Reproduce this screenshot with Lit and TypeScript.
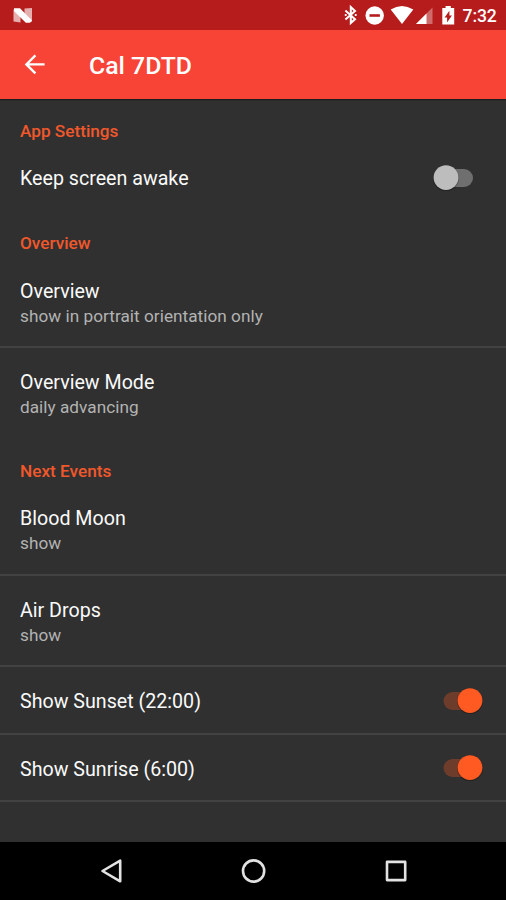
import { LitElement, html, css, nothing } from "lit";
import { customElement, property } from "lit/decorators.js";

@customElement("toggle-switch")
class ToggleSwitch extends LitElement {
  static properties = { on: { type: Boolean, reflect: true } };
  declare on: boolean;
  static styles = css`
    :host { display: block; width: 50px; height: 26px; flex: none; }
    svg { display: block; }
    .track { fill: #6f6f6f; }
    .thumb { fill: #bdbdbd; }
    :host([on]) .track { fill: #6e3c2b; }
    :host([on]) .thumb { fill: #ff5a22; }
    .shade { fill: #000; opacity: 0.25; }
  `;
  render() {
    const x = this.on ? 37 : 13;
    return html`<svg width="50" height="26" viewBox="0 0 50 26">
      <rect class="track" x="10.5" y="4" width="29.5" height="18" rx="9"></rect>
      <circle class="shade" cx=${x} cy="13.2" r="13"></circle>
      <circle class="thumb" cx=${x} cy="12.6" r="12.4"></circle>
    </svg>`;
  }
}

@customElement("setting-row")
class SettingRow extends LitElement {
  @property() label!: string;
  @property() summary?: string;
  @property({ type: Boolean }) toggle?: boolean;
  @property({ type: Boolean }) on?: boolean;
  static styles = css`
    :host { display: flex; box-sizing: border-box; align-items: center; justify-content: space-between;
      padding: 4px 23px 0 20px; height: 67.5px; border-bottom: 2px solid transparent; }
    :host([summary]) { height: 91.5px; }
    :host([divided]) { border-bottom-color: #424242; }
    .label { font-size: 19.65px; line-height: 25px; color: #fafafa; }
    .summary { font-size: 17.2px; line-height: 24px; color: #b3b3b3; letter-spacing: 0.03px; }
    toggle-switch { margin-top: -2.5px; }
  `;
  render() {
    return html`<div class="text">
        <div class="label">${this.label}</div>
        ${this.summary ? html`<div class="summary">${this.summary}</div>` : nothing}
      </div>
      ${this.toggle ? html`<toggle-switch ?on=${this.on}></toggle-switch>` : nothing}`;
  }
}

@customElement("app-root")
class AppRoot extends LitElement {
  static styles = css`
    :host { display: flex; flex-direction: column; width: 506px; height: 900px; overflow: hidden;
      background: #303030; font-family: Roboto, sans-serif; }
    svg { display: block; }
    .status { height: 30px; background: #b71c1c; flex: none; display: flex; justify-content: space-between; }
    .clock { font-size: 17.6px; font-weight: 500; fill: #fff; }
    .bar { height: 68.5px; background: #f74437; flex: none; display: flex; align-items: center;
      padding-left: 24px; box-shadow: 0 1px 1px #1c1c1c; position: relative; }
    h1 { margin: 3px 0 0 42px; font-size: 24.8px; font-weight: 500; color: #fff; line-height: 30px; }
    main { flex: 1; padding-top: 1px; }
    h2 { margin: 0; box-sizing: border-box; height: 44.7px; padding: 19.6px 20px 0; font-size: 17.2px; line-height: 24px;
      font-weight: 500; color: #f0582c; }
    .nav { height: 58px; background: #000; flex: none; }
    .line { fill: none; stroke: #e2e2e2; stroke-width: 2.6; stroke-linejoin: round; }
  `;
  render() {
    return html`
      <div class="status">
        <svg width="60" height="30" viewBox="0 0 60 30" fill="#fff">
          <path d="M13.5 9.5l7 4v9l-7-1z" opacity=".65"></path>
          <path d="M24.5 8.5l7.5-.5v14l-7.5-5z" opacity=".65"></path>
          <path d="M14 8.3h6L32 20.5 30 22.7h-4.2L14 11z"></path>
        </svg>
        <svg width="176" height="30" viewBox="0 0 176 30" fill="#fff">
          <path d="M15.4 10.6L25 19.2 20.8 23V7L25 10.9 15.4 19.4" fill="none" stroke="#fff" stroke-width="2"></path>
          <path d="M14.8 15h1.8M24.8 15h1.8" stroke="#fff" stroke-width="2"></path>
          <circle cx="44.7" cy="15.5" r="9.2"></circle>
          <path d="M39.5 14.2h10.4v2.6H39.5z" fill="#b71c1c"></path>
          <path d="M60.7 9.6Q72 2.4 83.3 9.6L72 24z"></path>
          <path d="M102.5 7.5V24H86z" opacity=".35"></path>
          <path d="M96.5 13.5V24H86z"></path>
          <path d="M112.3 8h3.3V6h5.2v2h3.4v16.5h-11.9z"></path>
          <path d="M119.4 10.8v4.6h2.5l-4.8 7.2v-5h-2.5z" fill="#b71c1c"></path>
          <text class="clock" x="132.5" y="22.3" textLength="34.3">7:32</text>
        </svg>
      </div>
      <div class="bar">
        <svg width="23" height="24" viewBox="0 0 23 24">
          <path d="M20.6 12.4H3M11.4 3.4L2.4 12.4l9 9" fill="none" stroke="#fff" stroke-width="2.4"></path>
        </svg>
        <h1>Cal 7DTD</h1>
      </div>
      <main>
        <h2>App Settings</h2>
        <setting-row label="Keep screen awake" toggle></setting-row>
        <h2>Overview</h2>
        <setting-row divided label="Overview" summary="show in portrait orientation only"></setting-row>
        <setting-row label="Overview Mode" summary="daily advancing"></setting-row>
        <h2>Next Events</h2>
        <setting-row divided label="Blood Moon" summary="show"></setting-row>
        <setting-row divided label="Air Drops" summary="show"></setting-row>
        <setting-row divided label="Show Sunset (22:00)" toggle on></setting-row>
        <setting-row divided label="Show Sunrise (6:00)" toggle on></setting-row>
      </main>
      <div class="nav">
        <svg width="506" height="58" viewBox="0 0 506 58">
          <path class="line" d="M102.5 29L120.2 18.7V39.3z"></path>
          <circle class="line" cx="253.6" cy="29" r="10.6"></circle>
          <rect class="line" x="387" y="19.9" width="18.2" height="18.2"></rect>
        </svg>
      </div>`;
  }
}
